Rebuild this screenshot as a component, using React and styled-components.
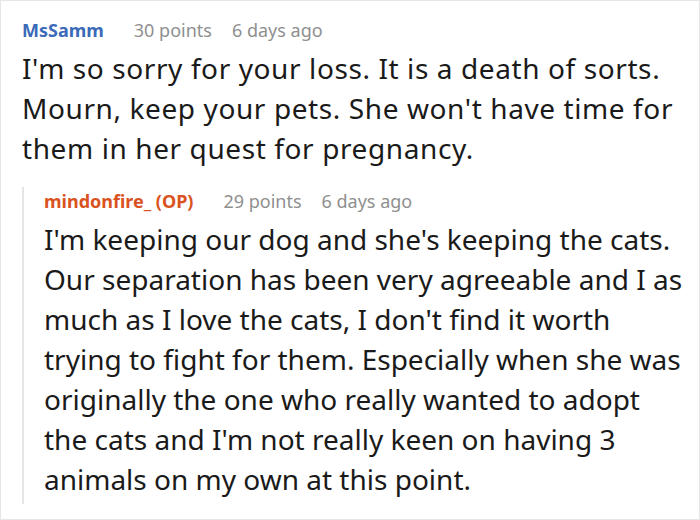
import React from "react";
import styled, {createGlobalStyle} from "styled-components";

const GlobalStyle = createGlobalStyle`
  html, body {
    margin: 0;
    padding: 0;
    background: #fff;
  }
  body {
    font-family: "Noto Sans", "Open Sans", sans-serif;
  }
`;

// lines are kept as in the original post so the wrap matches
const comment = {
  author: "MsSamm",
  points: "30 points",
  date: "6 days ago",
  lines: [
    "I'm so sorry for your loss. It is a death of sorts.",
    "Mourn, keep your pets. She won't have time for",
    "them in her quest for pregnancy.",
  ],
  reply: {
    author: "mindonfire_ (OP)",
    points: "29 points",
    date: "6 days ago",
    lines: [
      "I'm keeping our dog and she's keeping the cats.",
      "Our separation has been very agreeable and I as",
      "much as I love the cats, I don't find it worth",
      "trying to fight for them. Especially when she was",
      "originally the one who really wanted to adopt",
      "the cats and I'm not really keen on having 3",
      "animals on my own at this point.",
    ],
  },
};

const CommentBody = ({author, points, date, lines, op, wide}) => (
  <Comment>
    <Meta>
      <Author $op={op}>{author}</Author>
      <Info>{points}</Info>
      <Info>{date}</Info>
    </Meta>
    <Text $wide={wide}>
      {lines.map((line) => <Line key={line}>{line}</Line>)}
    </Text>
  </Comment>
);

const App = () => {
  const {reply} = comment;
  return (
    <>
      <GlobalStyle/>
      <Frame>
        <CommentBody {...comment} wide/>
        <Thread>
          <CommentBody {...reply} op/>
        </Thread>
      </Frame>
    </>
  );
};

const Frame = styled.div`
  box-sizing: border-box;
  width: 700px;
  height: 520px;
  border: 1px solid #e6e6e6;
  padding: 15px 0 0 21px;
  overflow: hidden;
`;

const Comment = styled.div`
  display: flex;
  flex-direction: column;
`;

const Meta = styled.div`
  display: flex;
  align-items: baseline;
  gap: 20px;
  font-size: 18px;
  line-height: 28px;
`;

const Author = styled.span`
  font-weight: 700;
  color: ${(p) => (p.$op ? "#d9531e" : "#3a6ab8")};
  margin-right: 10px;
`;

const Info = styled.span`
  color: #8f8f8f;
`;

const Text = styled.p`
  margin: 4px 0 0;
  font-size: 28px;
  line-height: 40px;
  letter-spacing: ${(p) => (p.$wide ? "0.6px" : "0")};
  color: #1a1a1a;
`;

const Line = styled.span`
  display: block;
  white-space: nowrap;
`;

const Thread = styled.div`
  margin-top: 19px;
  padding-left: 20px;
  padding-bottom: 5px;
  border-left: 2px solid #e5e5e5;
`;

export default App;
